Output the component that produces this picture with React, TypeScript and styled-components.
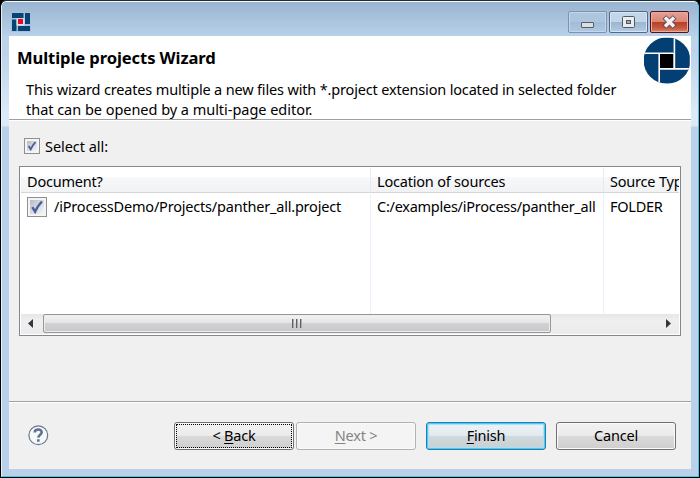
import React from 'react';
import styled, { createGlobalStyle, css } from 'styled-components';

const GlobalStyle = createGlobalStyle`
  *, *::before, *::after { box-sizing: border-box; }
  html, body { margin: 0; padding: 0; overflow: hidden; background: #000; }
  body { font-family: "Noto Sans", sans-serif; font-size: 14.5px; color: #000; }
`;

const Window = styled.div`
  width: 700px;
  height: 478px;
  border: 1px solid #000;
  border-top-color: #202b33;
  border-radius: 6px 6px 0 0;
  overflow: hidden;
`;

const Frame = styled.div`
  height: 476px;
  border: 1px solid #35cfee;
  border-left-color: #e2f2fb;
  border-top-color: #f6fbfe;
  border-radius: 5px 5px 0 0;
  padding: 0 7px 7px;
  background:
    linear-gradient(#99b4d1, #b9d1ea) 0 0 / 100% 34px no-repeat,
    linear-gradient(#b9d1ea 0, #bcd3eb 50px, #dce9f7 110px, #dce9f7 124px, #b9d1ea 125px);
`;

const TitleBar = styled.header`
  height: 34px;
  display: flex;
  justify-content: space-between;
  align-items: flex-start;
  padding: 9px 2px 0 2px;
`;

const AppIcon = styled.svg`
  display: block;
  margin-top: 1px;
`;

const Controls = styled.div`
  display: flex;
  gap: 2px;
`;

const Control = styled.button<{ $kind: 'plain' | 'active' | 'close' }>`
  width: 39px;
  height: 22px;
  padding: 0;
  border: 1px solid #7b93ae;
  border-radius: 2px;
  box-shadow: inset 0 0 0 1px #c5d8eb;
  background: linear-gradient(#aec5de 0 48%, #a2bbd7 50%, #b0c8e1);
  svg { display: block; }
  ${({ $kind }) => $kind === 'active' && css`
    border-color: #536b84;
    box-shadow: inset 0 0 0 1px #d5e5f3;
    background: linear-gradient(#c2d6e9 0 48%, #9ab4cf 50%, #b4cce5);
  `}
  ${({ $kind }) => $kind === 'close' && css`
    border-color: #4c1420;
    box-shadow: inset 0 0 0 1px #e9aaa0;
    background: linear-gradient(#e5a193, #d98775 48%, #b93d28 50%, #c55a3d 80%, #d58a6c);
  `}
`;

const Client = styled.main`
  height: 433px;
  display: flex;
  flex-direction: column;
  background: #f0f0f0;
`;

const Banner = styled.section`
  height: 85px;
  flex: none;
  display: flex;
  justify-content: space-between;
  background: #fff;
  border-bottom: 1px solid #fff;
  box-shadow: inset 0 -1px #a0a0a0;
`;

const BannerText = styled.div`
  padding: 10px 0 0 8px;
  white-space: nowrap;
`;

const Title = styled.h1`
  margin: 0;
  font-size: 16.6px;
  line-height: 24px;
  font-weight: 700;
  letter-spacing: -0.1px;
`;

const Description = styled.p`
  margin: 9px 0 0 9px;
  line-height: 20px;
  letter-spacing: -0.165px;
`;

const LooseLine = styled.span`
  letter-spacing: -0.03px;
`;

const Logo = styled.svg`
  display: block;
  margin: 1px 0 0;
`;

const Body = styled.section`
  height: 280px;
  flex: none;
  padding: 14px 10px 0;
`;

const SelectAll = styled.label`
  display: flex;
  align-items: center;
  height: 22px;
  margin: 0 0 9px 5px;
  gap: 5px;
  letter-spacing: -0.05px;
`;

const CheckBox = styled.span<{ $size: number }>`
  width: ${({ $size }) => $size}px;
  height: ${({ $size }) => $size}px;
  flex: none;
  display: block;
  border: 1px solid #8e8f8f;
  background: #f4f4f4;
  padding: 2px;
  svg {
    display: block;
    width: 100%;
    height: 100%;
    background: linear-gradient(135deg, #b6bcc8, #f5f6f8);
  }
`;

const Table = styled.div`
  width: 662px;
  height: 170px;
  border: 1px solid #828790;
  background: #fff;
  padding: 1px;
  overflow: hidden;
`;

const Columns = styled.div`
  display: grid;
  grid-template-columns: 350px 233px 75px;
  letter-spacing: -0.2px;
  white-space: nowrap;
`;

const HeadCell = styled.div`
  height: 25px;
  padding: 0 0 0 6px;
  line-height: 26px;
  overflow: hidden;
  border-bottom: 1px solid #d5d5d5;
  border-right: 1px solid #e8ebee;
  background: linear-gradient(#fff 0 9px, #f7f8fa 9px, #f1f2f4);
  &:last-child { border-right: 0; }
`;

const Cell = styled.div`
  height: 121px;
  padding: 4px 0 0 6px;
  line-height: 19px;
  letter-spacing: -0.26px;
  border-right: 1px solid #e9f3fd;
  &:last-child { border-right: 0; }
`;

const FileName = styled.div`
  display: flex;
  gap: 7px;
  letter-spacing: -0.2px;
`;

const ScrollBar = styled.div`
  height: 20px;
  display: flex;
  align-items: stretch;
  background: linear-gradient(#e6e6e6, #efefef 30%, #ececec);
`;

const Arrow = styled.button`
  width: 22px;
  padding: 0;
  border: 0;
  background: none;
  svg { display: block; }
  &:last-child { margin-left: auto; }
`;

const Thumb = styled.div`
  width: 508px;
  height: 19px;
  display: flex;
  align-items: center;
  justify-content: center;
  gap: 2px;
  border: 1px solid #979797;
  border-radius: 2px;
  box-shadow: inset 0 0 0 1px #ededed;
  background: linear-gradient(#f3f3f3, #e5e5e6 45%, #d2d2d4 50%, #c8c8ca);
`;

const Grip = styled.i`
  width: 2px;
  height: 9px;
  background: linear-gradient(90deg, #606060 50%, #ababab 50%);
`;

const Footer = styled.footer`
  flex: 1;
  display: flex;
  align-items: flex-start;
  border-top: 1px solid #a0a0a0;
  box-shadow: inset 0 1px #fff;
  padding: 20px 15px 0 19px;
`;

const Help = styled.svg`
  display: block;
  margin: 3px auto 0 0;
`;

const Button = styled.button<{ $variant?: 'focused' | 'disabled' | 'primary'; $gap?: number }>`
  width: 120px;
  height: 28px;
  margin-left: ${({ $gap = 10 }) => $gap}px;
  padding: 0 0 1px;
  border: 1px solid #707070;
  border-radius: 3px;
  box-shadow: inset 0 0 0 1px #fafafa;
  background: linear-gradient(#f2f2f2, #ebebeb 48%, #dadada 50%, #cfcfcf);
  font: inherit;
  line-height: 25px;
  letter-spacing: -0.2px;
  color: #000;
  u { text-underline-offset: 2px; text-decoration-thickness: 1px; text-decoration-skip-ink: none; }
  ${({ $variant }) => $variant === 'focused' && css`
    outline: 1px dotted #000;
    outline-offset: -3px;
  `}
  ${({ $variant }) => $variant === 'disabled' && css`
    border-color: #adb2b5;
    background: #f4f4f4;
    color: #838383;
  `}
  ${({ $variant }) => $variant === 'primary' && css`
    border-color: #2c7aac;
    box-shadow: inset 0 0 0 1px #3fd0fa, inset 0 0 1px 2px #a9e0f3;
    background: linear-gradient(#edf3f5, #e3eaee 48%, #cfd9df 50%, #cacfd1);
  `}
`;

const Check = () => (
  <svg viewBox="0 0 12 12">
    <path d="M2 6.1 L4.4 10 Q6.2 5.5 10.2 1.3" fill="none" stroke="#4a5f97" strokeWidth="2.1" />
  </svg>
);

export default function App() {
  return (
    <>
      <GlobalStyle />
      <Window>
        <Frame>
          <TitleBar>
            <AppIcon width="20" height="20" viewBox="0 0 20 20">
              <path d="M0 0h20v20H0z" fill="#a9c1d8" />
              <path d="M1 1h11.5v5H1zM14 1h5v11h-5zM7 14h12v5H7zM1 7.5h4.5V19H1z" fill="#064377" />
              <path d="M5.5 6.5h8v7h-8z" fill="#dce4ed" />
              <path d="M7 7h5v5H7z" fill="#ed0722" />
            </AppIcon>
            <Controls>
              <Control $kind="plain" aria-label="Minimize">
                <svg width="37" height="20">
                  <rect x="12.5" y="10.5" width="12" height="5" rx=".5" fill="#dedede" stroke="#535d68" />
                </svg>
              </Control>
              <Control $kind="active" aria-label="Maximize">
                <svg width="37" height="20">
                  <rect x="12.5" y="4.5" width="12" height="11" rx="1" fill="#ececec" stroke="#4f5964" />
                  <rect x="16.5" y="8.5" width="4" height="3" fill="#8fadd0" stroke="#4f5964" />
                </svg>
              </Control>
              <Control $kind="close" aria-label="Close">
                <svg width="37" height="20">
                  <path d="M13.4 5 L23.6 15 M23.6 5 L13.4 15" stroke="#5d4855" strokeWidth="5.2" />
                  <path d="M14 5.6 L23 14.4 M23 5.6 L14 14.4" stroke="#f3f1f1" strokeWidth="3.5" />
                </svg>
              </Control>
            </Controls>
          </TitleBar>
          <Client>
            <Banner>
              <BannerText>
                <Title>Multiple projects Wizard</Title>
                <Description>
                  This wizard creates multiple a new files with *.project extension located in selected folder
                  <br />
                  <LooseLine>that can be opened by a multi-page editor.</LooseLine>
                </Description>
              </BannerText>
              <Logo width="48" height="48" viewBox="0 0 48 48">
                <clipPath id="disc"><circle cx="24" cy="23.5" r="23.4" /></clipPath>
                <g clipPath="url(#disc)">
                  <path d="M1 .7h45.8v45.8H1z" fill="#043f73" />
                  <path d="M31.4 0V31M0 16.2H30M16.2 16V48M16 31.9H48" stroke="#fff" strokeWidth="1.6" />
                </g>
                <path d="M16 16h15v16H16z" fill="#fff" />
                <path d="M17 17h13.3v14H17z" />
              </Logo>
            </Banner>
            <Body>
              <SelectAll>
                <CheckBox $size={16}><Check /></CheckBox>
                Select all:
              </SelectAll>
              <Table>
                <Columns>
                  <HeadCell>Document?</HeadCell>
                  <HeadCell>Location of sources</HeadCell>
                  <HeadCell>Source Type</HeadCell>
                </Columns>
                <Columns>
                  <Cell>
                    <FileName>
                      <CheckBox $size={20}><Check /></CheckBox>
                      /iProcessDemo/Projects/panther_all.project
                    </FileName>
                  </Cell>
                  <Cell>C:/examples/iProcess/panther_all</Cell>
                  <Cell>FOLDER</Cell>
                </Columns>
                <ScrollBar>
                  <Arrow aria-label="Scroll left">
                    <svg width="22" height="20"><path d="M12 5v9L7 9.5z" fill="#363636" /></svg>
                  </Arrow>
                  <Thumb><Grip /><Grip /><Grip /></Thumb>
                  <Arrow aria-label="Scroll right">
                    <svg width="22" height="20"><path d="M9 5v9l5-4.5z" fill="#363636" /></svg>
                  </Arrow>
                </ScrollBar>
              </Table>
            </Body>
            <Footer>
              <Help width="21" height="21" viewBox="0 0 21 21">
                <circle cx="10.3" cy="10.3" r="9.4" fill="#f7f8fa" stroke="#667791" strokeWidth="1.2" />
                <path d="M6.7 7.5C6.9 3.5 13.9 3.6 13.7 7.4C13.6 9.6 10.4 9.8 10.3 12.6M10.3 14.2v2.5" fill="none" stroke="#60728f" strokeWidth="2.6" />
              </Help>
              <Button $variant="focused">&lt; <u>B</u>ack</Button>
              <Button $variant="disabled" $gap={2}><u>N</u>ext &gt;</Button>
              <Button $variant="primary"><u>F</u>inish</Button>
              <Button>Cancel</Button>
            </Footer>
          </Client>
        </Frame>
      </Window>
    </>
  );
}
